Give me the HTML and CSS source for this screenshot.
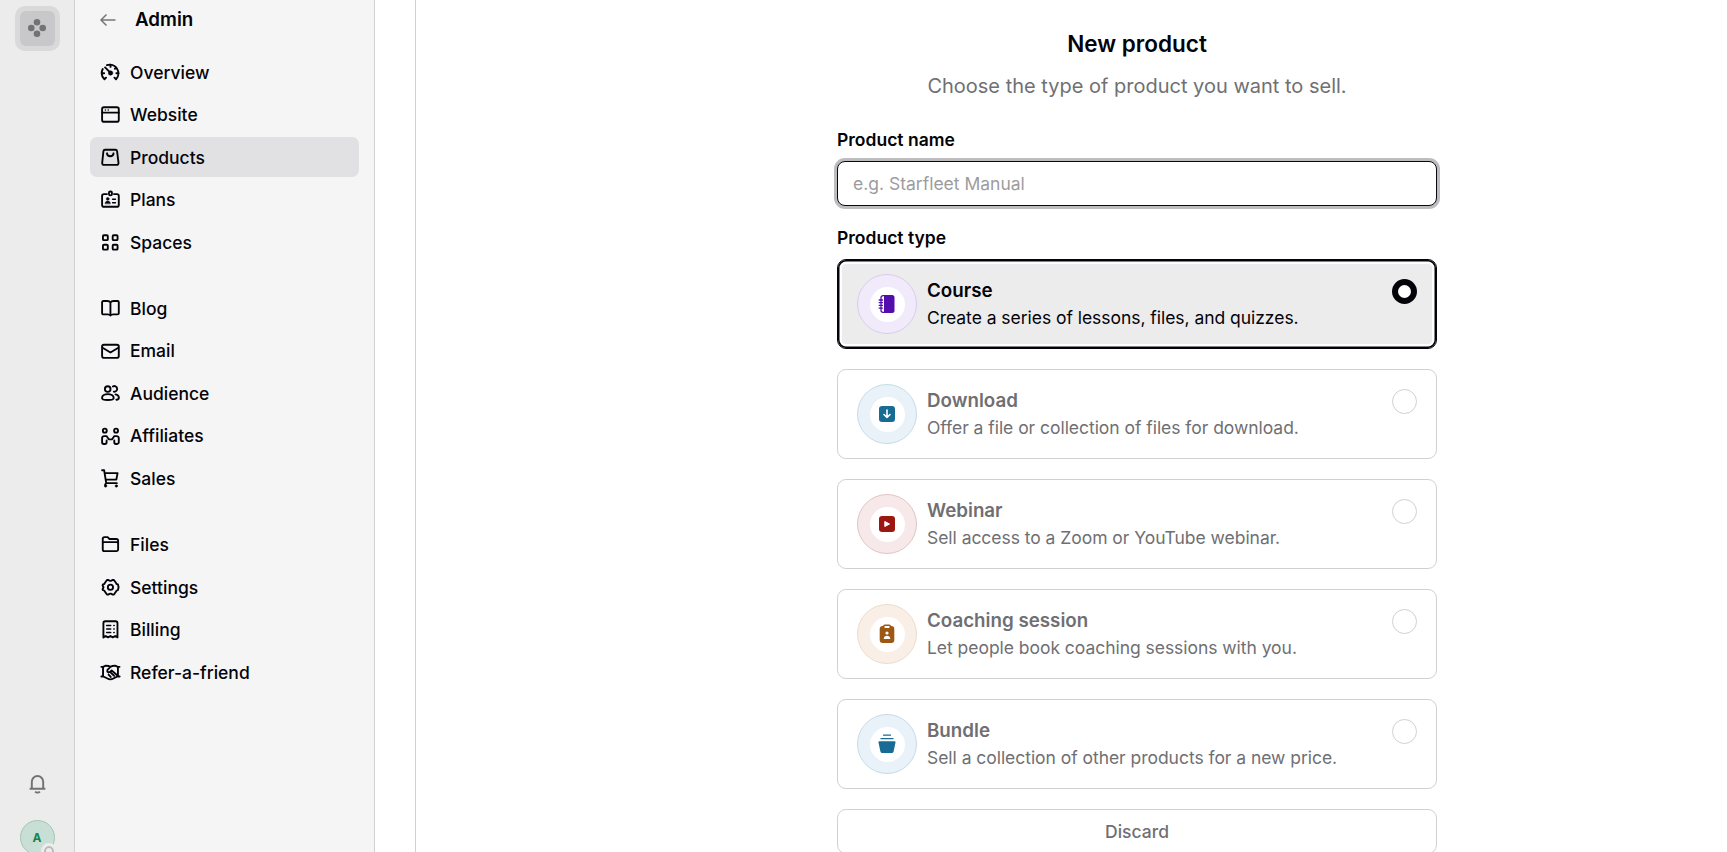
FILE: index.html
```html
<!DOCTYPE html>
<html lang="en">
<head>
    <meta charset="UTF-8">
    <meta name="viewport" content="width=device-width, initial-scale=1.0">
    <title>New product</title>
    <link rel="stylesheet" href="styles.css">
</head>
<body>
    <div class="rail">
        <a class="workspace" href="#">
            <span class="workspace-logo">
                <svg viewBox="0 0 18 18"><circle cx="9" cy="3.3" r="3.3"/><circle cx="3.3" cy="9" r="3.3"/><circle cx="14.7" cy="9" r="3.3"/><circle cx="9" cy="14.7" r="3.3"/></svg>
            </span>
        </a>
        <div class="rail-bottom">
            <svg class="bell" viewBox="0 0 24 24"><path d="M3 18h18M5.500 18v-8a6.500 6.500 0 0 1 13 0v8M9.300 21.200c.8.900 1.700 1.200 2.700 1.200s1.900-.3 2.700-1.200"/></svg>
            <div class="avatar">A<span class="status"></span></div>
        </div>
    </div>

    <aside class="sidebar">
        <div class="sidebar-header">
            <svg class="back" viewBox="0 0 16 12"><path d="M15.500 6H1M6.500.5L1 6l5.500 5.500"/></svg>
            <h2>Admin</h2>
        </div>
        <nav class="nav">
            <div class="nav-group">
                <a class="nav-item" href="#">
                    <svg viewBox="0 0 24 24"><path d="M5.800 19.500A9.500 9.500 0 0 1 4 8.500M8.500 4.500a9.200 9.200 0 0 1 9.700 15M3 13h2.500M18.500 13H21M12.300 4v2.300M18.500 7l-1.500 1.300M5.800 19.500l1.700-1.700M18.200 19.500l-1.700-1.700M6.500 6.800l5 5"/><circle class="solid" cx="12.300" cy="12.800" r="2.400"/></svg>
                    Overview
                </a>
                <a class="nav-item" href="#">
                    <svg viewBox="0 0 24 24"><rect x="3.300" y="4.500" width="17.800" height="15.500" rx="2"/><path d="M3.300 10.300h17.800"/><path class="dots" d="M6.800 7.500h.1M9.800 7.500h.1"/></svg>
                    Website
                </a>
                <a class="nav-item active" href="#">
                    <svg viewBox="0 0 24 24"><path d="M6.500 4h11a1.800 1.800 0 0 1 1.800 1.600l1.500 12.500a1.800 1.800 0 0 1-1.800 2H5.200a1.800 1.800 0 0 1-1.800-2L4.700 5.600A1.800 1.800 0 0 1 6.500 4zM8.500 7.800c.5 4.200 6.500 4.200 7 0"/></svg>
                    Products
                </a>
                <a class="nav-item" href="#">
                    <svg viewBox="0 0 24 24"><path d="M8.500 6.500H5.300a2 2 0 0 0-2 2V18a2 2 0 0 0 2 2h13.800a2 2 0 0 0 2-2V8.500a2 2 0 0 0-2-2h-3.200"/><rect x="10.600" y="3.700" width="3.200" height="4.200" rx="1.400"/><path class="thin" d="M14.500 12h3M14.500 15.800h3"/><circle class="solid" cx="9.300" cy="11.600" r="1.500"/><path class="solid" d="M6.500 16.500c0-3.500 5.600-3.500 5.600 0z"/></svg>
                    Plans
                </a>
                <a class="nav-item" href="#">
                    <svg viewBox="0 0 24 24"><rect x="4.200" y="4.500" width="5.200" height="5.200" rx="1"/><rect x="14.600" y="4.500" width="5.200" height="5.200" rx="1"/><rect x="4.200" y="14.600" width="5.200" height="5.200" rx="1"/><rect x="14.600" y="14.600" width="5.200" height="5.200" rx="1"/></svg>
                    Spaces
                </a>
            </div>
            <div class="nav-group">
                <a class="nav-item" href="#">
                    <svg viewBox="0 0 24 24"><path d="M12.200 6C11.500 4.800 10.300 4.300 9 4.300H4.600a1.300 1.300 0 0 0-1.300 1.300v11.600a1.300 1.300 0 0 0 1.300 1.300h4.700c1.200 0 2.300.4 2.900 1.200.6-.8 1.700-1.200 2.900-1.200h4.700a1.300 1.300 0 0 0 1.300-1.300V5.600a1.300 1.300 0 0 0-1.300-1.300h-4.400c-1.300 0-2.500.5-3.200 1.700zM12.200 6v13.500"/></svg>
                    Blog
                </a>
                <a class="nav-item" href="#">
                    <svg viewBox="0 0 24 24"><rect x="3.300" y="5" width="17.800" height="14" rx="2"/><path d="M3.800 8.300l8.400 5 8.400-5"/></svg>
                    Email
                </a>
                <a class="nav-item" href="#">
                    <svg viewBox="0 0 24 24"><circle cx="9.300" cy="7.500" r="3"/><path d="M3.200 17c0-5.500 12.500-5.500 12.500 0 0 3-12.500 3-12.500 0zM14.800 4.800a3 3 0 1 1 1 5.500M17.600 13.200c2.400.4 3.600 2 3.600 3.500 0 1.400-1 2-2.700 2.200"/></svg>
                    Audience
                </a>
                <a class="nav-item" href="#">
                    <svg viewBox="0 0 24 24"><circle cx="6.200" cy="6" r="2.100"/><circle cx="18.200" cy="6" r="2.100"/><path d="M11.600 15.300h-1.200L8 11.800H5.600a2.300 2.300 0 0 0-2.300 2.300v4.300a1.800 1.800 0 0 0 1.800 1.800h1.200a1.800 1.800 0 0 0 1.800-1.800v-1.900M12.800 15.300H14l2.400-3.500h2.400a2.300 2.300 0 0 1 2.300 2.300v4.300a1.800 1.800 0 0 1-1.800 1.800h-1.200a1.800 1.800 0 0 1-1.800-1.800v-1.900"/></svg>
                    Affiliates
                </a>
                <a class="nav-item" href="#">
                    <svg viewBox="0 0 24 24"><path d="M3.300 3.500H5.500l2.200 13.700h11.300M6 6.500h13.800l-1.300 7H7.200M7.700 17.200l-1.200 1.700"/><circle class="solid" cx="7" cy="20.200" r="1.300"/><circle class="solid" cx="18.500" cy="20.200" r="1.300"/></svg>
                    Sales
                </a>
            </div>
            <div class="nav-group">
                <a class="nav-item" href="#">
                    <svg viewBox="0 0 24 24"><path d="M4 17.500V6.200a1.800 1.800 0 0 1 1.800-1.800h3.400l2 2h7.400a1.800 1.800 0 0 1 1.800 1.800v9.300a1.800 1.800 0 0 1-1.800 1.800H5.800A1.800 1.800 0 0 1 4 17.500zM4 11a1.500 1.500 0 0 1 1.500-1.300h13.400a1.500 1.500 0 0 1 1.500 1.300"/></svg>
                    Files
                </a>
                <a class="nav-item" href="#">
                    <svg viewBox="0 0 24 24"><path d="M8.500 4.200h1.700c.8 1.300 3.200 1.300 4 0h1.700l2.300 3.300c.1.900.9 1.300 2 1.500l.7 3-.7 3c-1.100.2-1.900.6-2 1.500l-2.300 3.300h-1.700c-.8-1.300-3.200-1.300-4 0H8.500l-2.300-3.300c-.1-.9-.9-1.300-2-1.500L3.800 14c1.200-1.300 1.200-2.700 0-4l.4-1c1.100-.2 1.900-.6 2-1.500z"/><circle cx="12.200" cy="12" r="2.800"/></svg>
                    Settings
                </a>
                <a class="nav-item" href="#">
                    <svg viewBox="0 0 24 24"><path d="M4.700 20.700V5.500a2 2 0 0 1 2-2h11a2 2 0 0 1 2 2v15.200l-2.500-1.500-2.500 1.500-2.500-1.500-2.500 1.500-2.500-1.500z"/><path class="thin" d="M8.200 8h4.300M8.200 11.700h4.300M8.200 15.400h4.300M15.800 8h.4M15.800 11.700h.4M15.800 15.400h.4"/></svg>
                    Billing
                </a>
                <a class="nav-item" href="#">
                    <svg viewBox="0 0 24 24"><path d="M2.500 6.200h1.800l3-1.200 2.700.3 2.200.9 2.200-.9 2.700-.3 3 1.200h1.800M4.300 6.200v10.300M20.200 6.200v10.300M2.500 16.500h2.200l4.300 2.200c1.800 1 4.500 1 6.300 0l4.300-2.200H22M12.200 6.200L9 9.500c-.8 2.500 1.500 3.200 3 1.800l1.500-1.300 5.500 5M10.200 14.500l2.300 2.500M13 12.800l3.200 3"/></svg>
                    Refer-a-friend
                </a>
            </div>
        </nav>
    </aside>

    <main class="main">
        <form class="product-form">
            <h1>New product</h1>
            <p class="subtitle">Choose the type of product you want to sell.</p>

            <label class="field-label" for="product-name">Product name</label>
            <input class="text-input" type="text" id="product-name" placeholder="e.g. Starfleet Manual">

            <span class="field-label type-label">Product type</span>
            <div class="options">
                <label class="option selected">
                    <span class="badge purple">
                        <span class="badge-inner">
                            <svg viewBox="0 0 18 18"><path fill="currentColor" d="M6 0h8a2.500 2.500 0 0 1 2.500 2.500v13A2.500 2.500 0 0 1 14 18H6z"/><path fill="none" stroke="currentColor" stroke-width="1.300" d="M6.500.7H5a2 2 0 0 0-2 2v12.600a2 2 0 0 0 2 2h1.500M.7 5H5M.7 7.700H5M.7 10.400H5M.7 13.100H5"/></svg>
                        </span>
                    </span>
                    <span class="option-text">
                        <strong>Course</strong>
                        <span>Create a series of lessons, files, and quizzes.</span>
                    </span>
                    <input class="radio" type="radio" name="type" checked>
                </label>
                <label class="option">
                    <span class="badge blue">
                        <span class="badge-inner">
                            <svg viewBox="0 0 18 18"><rect x="1" y="1" width="16" height="16" rx="3" fill="currentColor"/><path fill="none" stroke="#fff" stroke-width="1.600" stroke-linecap="round" stroke-linejoin="round" d="M9 5v7.500M6 9.500l3 3 3-3"/></svg>
                        </span>
                    </span>
                    <span class="option-text">
                        <strong>Download</strong>
                        <span>Offer a file or collection of files for download.</span>
                    </span>
                    <input class="radio" type="radio" name="type">
                </label>
                <label class="option">
                    <span class="badge red">
                        <span class="badge-inner">
                            <svg viewBox="0 0 18 18"><rect x="1" y="1" width="16" height="16" rx="3" fill="currentColor"/><path fill="#fff" stroke="#fff" stroke-linejoin="round" d="M6.800 6.500v5L11.500 9z"/></svg>
                        </span>
                    </span>
                    <span class="option-text">
                        <strong>Webinar</strong>
                        <span>Sell access to a Zoom or YouTube webinar.</span>
                    </span>
                    <input class="radio" type="radio" name="type">
                </label>
                <label class="option">
                    <span class="badge orange">
                        <span class="badge-inner">
                            <svg class="tall" viewBox="0 0 18 20"><rect x="1.700" y="2" width="14.600" height="17" rx="3" fill="currentColor"/><rect x="5.700" y="1.200" width="6.600" height="3.500" rx="1.200" fill="#fff" stroke="currentColor" stroke-width="1.500"/><circle cx="9" cy="9" r="1.600" fill="#fff"/><path fill="#fff" d="M5.700 15c0-4.200 6.600-4.200 6.600 0z"/></svg>
                        </span>
                    </span>
                    <span class="option-text">
                        <strong>Coaching session</strong>
                        <span>Let people book coaching sessions with you.</span>
                    </span>
                    <input class="radio" type="radio" name="type">
                </label>
                <label class="option">
                    <span class="badge blue">
                        <span class="badge-inner">
                            <svg class="tall" viewBox="0 0 18 20"><path fill="none" stroke="currentColor" stroke-width="1.300" stroke-linecap="round" d="M5.500 1.200h7M3 4.700h12"/><path fill="currentColor" d="M1.500 7.300h15a1 1 0 0 1 1 1.200l-1.900 9a2 2 0 0 1-2 1.600H4.400a2 2 0 0 1-2-1.600L.5 8.500a1 1 0 0 1 1-1.200z"/></svg>
                        </span>
                    </span>
                    <span class="option-text">
                        <strong>Bundle</strong>
                        <span>Sell a collection of other products for a new price.</span>
                    </span>
                    <input class="radio" type="radio" name="type">
                </label>
                <button type="button" class="discard-btn">Discard</button>
            </div>
        </form>
    </main>
</body>
</html>
```
FILE: styles.css
```css
* {
    box-sizing: border-box;
}
body {
    margin: 0;
    height: 100vh;
    display: flex;
    overflow: hidden;
    font-family: Inter, sans-serif;
    font-size: 17.5px;
    color: #030309;
    background-color: #fff;
}
.rail {
    width: 75px;
    flex-shrink: 0;
    display: flex;
    flex-direction: column;
    align-items: center;
    justify-content: space-between;
    padding-top: 6px;
    background-color: #ececec;
    border-right: 1px solid #d1d1d4;
}
.workspace {
    width: 45px;
    height: 45px;
    padding: 5px;
    border-radius: 10px;
    background-color: #d9d9da;
}
.workspace-logo {
    height: 35px;
    display: flex;
    align-items: center;
    justify-content: center;
    border-radius: 6px;
    background-color: #c8c8ca;
}
.workspace-logo svg {
    width: 18px;
    height: 18px;
    margin-bottom: 1px;
    fill: #737375;
}
.rail-bottom {
    display: flex;
    flex-direction: column;
    align-items: center;
    gap: 26px;
    margin-bottom: -3px;
}
.bell {
    width: 21px;
    height: 21px;
    fill: none;
    stroke: #727274;
    stroke-width: 2.2;
}
.avatar {
    position: relative;
    width: 35px;
    height: 35px;
    display: flex;
    align-items: center;
    justify-content: center;
    border: 1px solid #a6c5b7;
    border-radius: 50%;
    background-color: #c8dfd5;
    color: #188254;
    font-size: 12px;
    font-weight: 700;
}
.status {
    position: absolute;
    right: -3px;
    bottom: -5px;
    width: 16px;
    height: 16px;
    border: 3px solid #ececec;
    border-radius: 50%;
    background-color: #ececec;
    box-shadow: inset 0 0 0 2px #b9b9bb;
}
.sidebar {
    width: 300px;
    flex-shrink: 0;
    padding: 0 15px;
    background-color: #f5f5f5;
    border-right: 1px solid #d1d1d4;
}
.sidebar-header {
    height: 52px;
    display: flex;
    align-items: flex-start;
    gap: 19px;
    padding: 8px 0 0 10px;
}
.sidebar-header h2 {
    margin: 0;
    font-size: 18.75px;
    line-height: 23px;
    font-weight: 600;
}
.back {
    width: 16px;
    height: 12px;
    margin-top: 6px;
    overflow: visible;
    fill: none;
    stroke: #77777a;
    stroke-width: 1.5;
}
.nav {
    display: flex;
    flex-direction: column;
    gap: 26.25px;
}
.nav-group {
    display: flex;
    flex-direction: column;
    gap: 2.5px;
}
.nav-item {
    height: 40px;
    display: flex;
    align-items: center;
    gap: 8.75px;
    padding: 0 8.75px;
    border-radius: 7px;
    color: inherit;
    font-weight: 500;
    text-decoration: none;
}
.nav-item.active {
    background-color: #e1e1e3;
}
.nav-item svg {
    width: 22.5px;
    height: 22.5px;
    fill: none;
    stroke: #030309;
    stroke-width: 2;
    stroke-linecap: round;
    stroke-linejoin: round;
}
.nav-item .solid {
    fill: #030309;
    stroke-width: 0.5;
}
.nav-item .dots,
.nav-item .thin {
    stroke-width: 1.6;
}
.main {
    flex: 1;
    margin-left: 40px;
    border-left: 1px solid #d1d1d4;
}
.product-form {
    width: 600px;
    margin-left: 421px;
    padding-top: 28px;
}
.product-form h1 {
    margin: 0;
    font-size: 22.5px;
    line-height: 32px;
    font-weight: 600;
    text-align: center;
}
.subtitle {
    margin: 10px 0 0;
    font-size: 20px;
    line-height: 32px;
    color: #707073;
    text-align: center;
}
.field-label {
    display: block;
    margin-top: 26px;
    line-height: 24px;
    font-weight: 600;
}
.text-input {
    display: block;
    width: 100%;
    height: 45px;
    margin-top: 9px;
    padding: 0 15px;
    border: 1px solid #09090f;
    border-radius: 8px;
    outline: none;
    box-shadow: 0 0 0 3px #bdbdbf;
    font: inherit;
}
.text-input::placeholder {
    color: #9c9c9e;
}
.type-label {
    margin-top: 20px;
}
.options {
    display: flex;
    flex-direction: column;
    gap: 20px;
    margin-top: 9px;
}
.option {
    height: 90px;
    display: flex;
    gap: 10px;
    padding: 14px 19px;
    border: 1px solid #d1d1d4;
    border-radius: 9px;
    color: #6f6f73;
}
.option.selected {
    border-color: #030309;
    background-color: #ececec;
    box-shadow: inset 0 0 0 1.5px #030309, inset 0 0 0 4px #fff;
    color: #030309;
}
.badge {
    width: 60px;
    height: 60px;
    flex-shrink: 0;
    display: flex;
    align-items: center;
    justify-content: center;
    border: 1px solid;
    border-radius: 50%;
}
.badge-inner {
    width: 35px;
    height: 35px;
    display: flex;
    align-items: center;
    justify-content: center;
    border-radius: 50%;
    background-color: #fff;
}
.badge svg {
    width: 18px;
    height: 18px;
}
.badge svg.tall {
    height: 20px;
}
.purple {
    color: #540dad;
    border-color: #dccbf0;
    background-color: #f1eafa;
}
.blue {
    color: #186b92;
    border-color: #c5dce8;
    background-color: #e8f2f8;
}
.red {
    color: #9d1712;
    border-color: #e0c4c5;
    background-color: #f7e9ea;
}
.orange {
    color: #9d5813;
    border-color: #ecdccb;
    background-color: #f9efe6;
}
.option-text {
    flex: 1;
    display: flex;
    flex-direction: column;
    padding-top: 3px;
    line-height: 27px;
    letter-spacing: -0.04px;
}
.option-text strong {
    font-size: 18.75px;
    font-weight: 600;
    letter-spacing: 0;
}
.radio {
    appearance: none;
    width: 25px;
    height: 25px;
    margin: 5px 0 0;
    border: 1px solid #d1d1d4;
    border-radius: 50%;
    background-color: #fff;
}
.radio:checked {
    border: 6px solid #030309;
}
.discard-btn {
    height: 45px;
    border: 1px solid #d1d1d4;
    border-radius: 9px;
    background-color: #fff;
    color: #6f6f73;
    font: inherit;
    font-weight: 500;
}
```
